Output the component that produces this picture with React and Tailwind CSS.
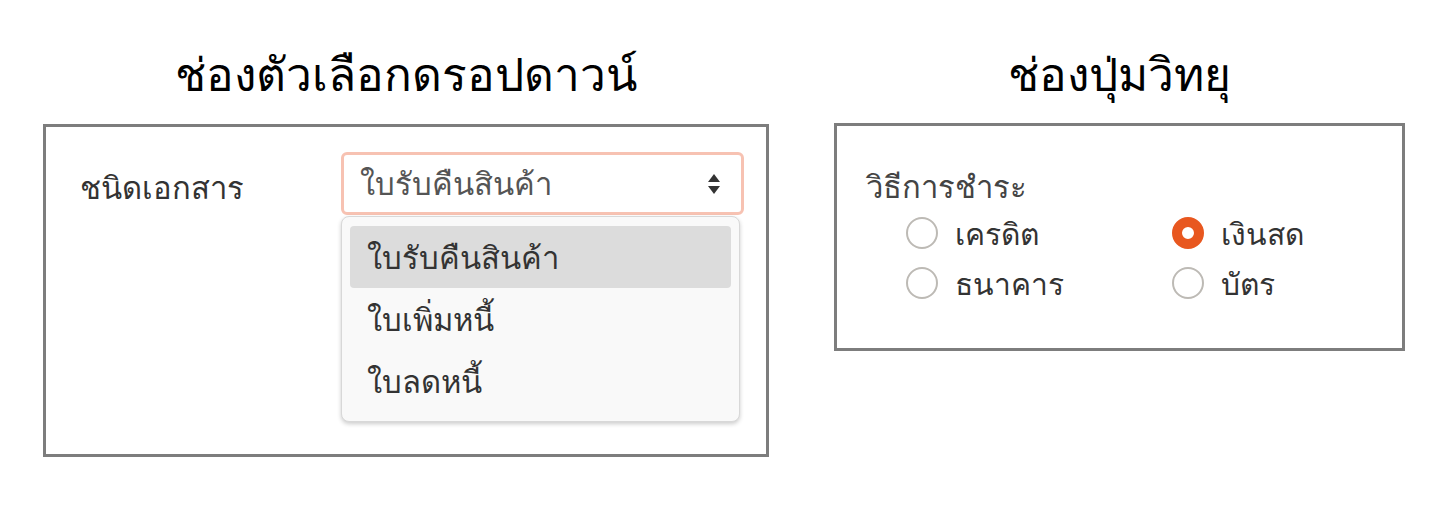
import React from "react";

const options = ["ใบรับคืนสินค้า", "ใบเพิ่มหนี้", "ใบลดหนี้"];
const payments = [
  { label: "เครดิต", checked: false },
  { label: "เงินสด", checked: true },
  { label: "ธนาคาร", checked: false },
  { label: "บัตร", checked: false },
];

function Radio({ label, checked }) {
  return (
    <label className="flex items-center gap-[17px] h-[50px]">
      {checked ? (
        <span className="w-[32px] h-[32px] rounded-full border-[10px] border-[#e8571f] bg-white" />
      ) : (
        <span className="w-[32px] h-[32px] rounded-full border-2 border-[#bdbab5] bg-white" />
      )}
      <span className="text-[30px] text-[#333]">{label}</span>
    </label>
  );
}

export default function App() {
  return (
    <div
      className="w-[1448px] h-[529px] bg-white flex pl-[43px] pt-[38px] gap-[65px]"
      style={{ fontFamily: '"Noto Sans", "Liberation Sans", sans-serif' }}
    >
      <div className="flex flex-col w-[726px]">
        <h2 className="text-[46px] leading-[70px] text-black text-center h-[86px]">
          ช่องตัวเลือกดรอปดาวน์
        </h2>
        <div className="border-[3px] border-[#7d7d7d] h-[333px] flex pl-[34px] pt-[25px]">
          <div className="w-[261px] text-[31px] text-[#333] pt-[12px]">ชนิดเอกสาร</div>
          <div className="relative w-[403px]">
            <div className="h-[63px] rounded-[6px] border-[3px] border-[#f7c2b2] bg-white flex items-center justify-between pl-[16px] pr-[20px]">
              <span className="text-[31px] text-[#555]">{options[0]}</span>
              <svg width="14" height="22" viewBox="0 0 14 22" fill="#333">
                <path d="M7 1 L13 9 L1 9 Z" />
                <path d="M7 21 L13 13 L1 13 Z" />
              </svg>
            </div>
            <div className="mt-[1px] w-[399px] h-[206px] rounded-[8px] bg-[#f9f9f9] border border-[#d8d8d8] shadow-[0_2px_4px_rgba(0,0,0,0.2)] px-[8px] pt-[9px]">
              {options.map((o, i) => (
                <div
                  key={o}
                  className={`h-[62px] rounded-[4px] flex items-center pl-[17px] text-[31px] text-[#333] ${
                    i === 0 ? "bg-[#dcdcdc]" : ""
                  }`}
                >
                  {o}
                </div>
              ))}
            </div>
          </div>
        </div>
      </div>

      <div className="flex flex-col w-[571px]">
        <h2 className="text-[46px] leading-[70px] text-black text-center h-[85px]">
          ช่องปุ่มวิทยุ
        </h2>
        <div className="border-[3px] border-[#7d7d7d] h-[228px] pl-[29px] pt-[38px]">
          <div className="text-[31px] text-[#444] leading-[44px]">วิธีการชำระ</div>
          <div className="grid grid-cols-[266px_1fr] pl-[40px]">
            {payments.map((p) => (
              <Radio key={p.label} {...p} />
            ))}
          </div>
        </div>
      </div>
    </div>
  );
}
